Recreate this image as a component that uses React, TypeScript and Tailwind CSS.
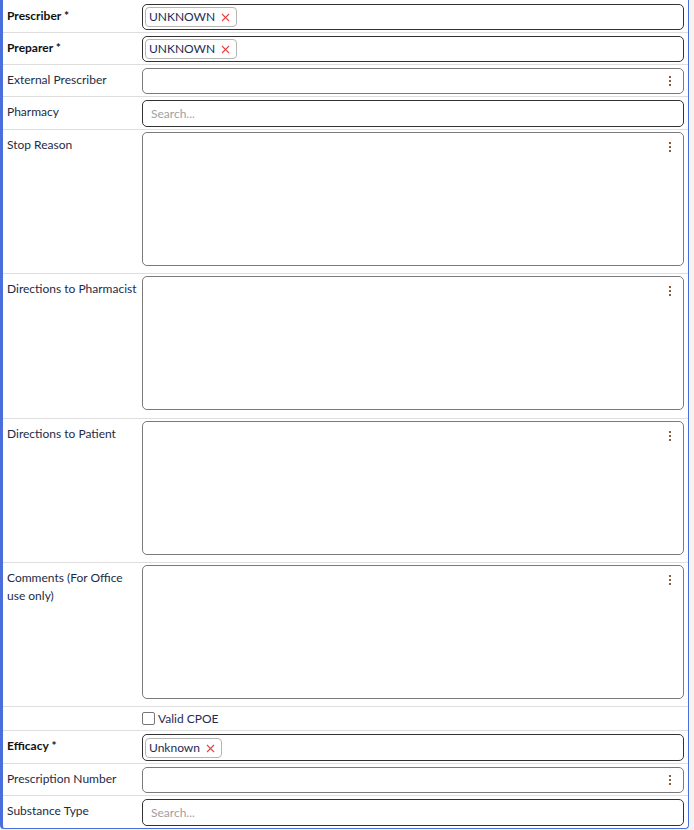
import React from "react";

type Field = {
  label: string;
  required?: boolean;
  kind: "chip" | "menu" | "search" | "area" | "check";
  value?: string;
  tall?: boolean;
};

const fields: Field[] = [
  { label: "Prescriber", required: true, kind: "chip", value: "UNKNOWN" },
  { label: "Preparer", required: true, kind: "chip", value: "UNKNOWN" },
  { label: "External Prescriber", kind: "menu" },
  { label: "Pharmacy", kind: "search" },
  { label: "Stop Reason", kind: "area" },
  { label: "Directions to Pharmacist", kind: "area", tall: true },
  { label: "Directions to Patient", kind: "area" },
  { label: "Comments (For Office use only)", kind: "area" },
  { label: "", kind: "check", value: "Valid CPOE" },
  { label: "Efficacy", required: true, kind: "chip", value: "Unknown", tall: true },
  { label: "Prescription Number", kind: "menu" },
  { label: "Substance Type", kind: "search" },
];

function Kebab() {
  return (
    <span className="flex flex-col gap-[2px]">
      <span className="h-[2px] w-[2px] bg-[#8a5a3c]" />
      <span className="h-[2px] w-[2px] bg-[#8a5a3c]" />
      <span className="h-[2px] w-[2px] bg-[#8a5a3c]" />
    </span>
  );
}

function Chip({ text }: { text: string }) {
  return (
    <span className="flex h-[20px] items-center gap-[6px] rounded-[4px] border border-[#b5b5b5] pl-[3px] pr-[6px] text-[12px] text-[#1d2b55]">
      {text}
      <svg width="9" height="9" viewBox="0 0 9 9" className="mt-[1px]">
        <path d="M1 1L8 8M8 1L1 8" stroke="#e04848" strokeWidth="1.1" />
      </svg>
    </span>
  );
}

function Control({ f }: { f: Field }) {
  if (f.kind === "check") {
    return (
      <label className="flex h-full items-center gap-[3px] text-[12px] text-[#1d2b55]">
        <span className="h-[13px] w-[13px] rounded-[2px] border border-[#767676] bg-white" />
        {f.value}
      </label>
    );
  }
  if (f.kind === "area") {
    return (
      <div className="flex h-[134px] justify-end rounded-[5px] border border-[#7a7a7a] bg-white pr-[12px] pt-[9px]">
        <Kebab />
      </div>
    );
  }
  if (f.kind === "menu") {
    return (
      <div className="flex h-[26px] items-center justify-end rounded-[5px] border border-[#7a7a7a] bg-white pr-[12px]">
        <Kebab />
      </div>
    );
  }
  if (f.kind === "search") {
    return (
      <div className="flex h-[27px] items-center rounded-[5px] border border-[#333] bg-white pl-[8px] text-[12px] text-[#a0a0a0]">
        Search...
      </div>
    );
  }
  return (
    <div
      className={`flex ${f.tall ? "h-[27px]" : "h-[26px]"} items-center rounded-[5px] border border-[#333] bg-white pl-[2px]`}
    >
      <Chip text={f.value ?? ""} />
    </div>
  );
}

function cellPad(f: Field) {
  if (f.kind === "check") return "h-[23px]";
  if (f.kind === "area") return f.tall ? "pb-[8px] pt-[2px]" : "pb-[7px] pt-[2px]";
  return "pb-[2px] pt-[3px]";
}

export default function App() {
  return (
    <div
      className="min-h-screen bg-[#f3f3f3]"
      style={{ fontFamily: 'Lato, "Noto Sans", sans-serif' }}
    >
      <div className="w-[689px] rounded-b-[4px] border-b border-l-[3px] border-r border-[#4a6fdc] bg-white pt-[1px]">
        {fields.map((f, i) => (
          <div
            key={i}
            className={`grid grid-cols-[139px_1fr] ${i < fields.length - 1 ? "border-b border-[#dedede]" : ""}`}
          >
            <div
              className={`pl-[4px] pr-[4px] text-[12px] leading-[18px] text-[#1d2b45] ${f.kind === "check" ? "" : "pt-[6px]"} ${f.required ? "font-bold text-[#111]" : ""}`}
            >
              {f.label}
              {f.required ? " *" : ""}
            </div>
            <div className={`pr-[4px] ${cellPad(f)}`}>
              <Control f={f} />
            </div>
          </div>
        ))}
      </div>
    </div>
  );
}
